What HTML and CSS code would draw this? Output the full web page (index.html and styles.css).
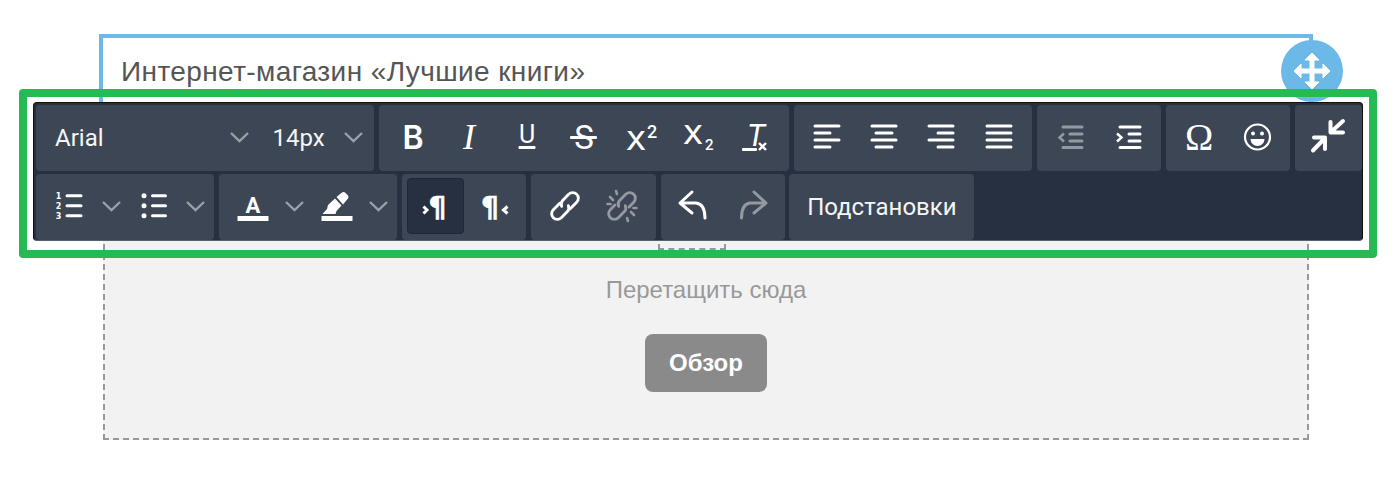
FILE: index.html
```html
<!DOCTYPE html>
<html lang="en">

<head>
  <meta charset="UTF-8">
  <meta name="viewport" content="width=device-width, initial-scale=1.0">
  <title>Редактор</title>
  <link rel="stylesheet" href="styles.css">
</head>

<body>
  <main class="page">
    <section class="editable">
      <h2 class="title">Интернет-магазин «Лучшие книги»</h2>
      <div class="move">
        <svg viewBox="-20 -20 40 40" width="40" height="40"><path class="move-arrows" d="M0-18L7-11H2V-2H11V-7L18 0L11 7V2H2V11H7L0 18L-7 11H-2V2H-11V7L-18 0L-11-7V-2H-2V-11H-7Z"/></svg>
      </div>
    </section>

    <section class="dropzone">
      <div class="drop-thumb"></div>
      <p class="drop-text">Перетащить сюда</p>
      <button class="browse">Обзор</button>
    </section>

    <!-- toolbar lies over the block being edited -->
    <div class="toolbar">
      <div class="row row-top">
        <div class="group group-fonts">
          <div class="select select-font"><span>Arial</span><svg class="chev" viewBox="0 0 27 12" width="27" height="12"><path d="M5 2l8.500 8L22 2"/></svg></div>
          <div class="select select-size"><span>14px</span><svg class="chev" viewBox="0 0 27 12" width="27" height="12"><path d="M5 2l8.500 8L22 2"/></svg></div>
        </div>

        <div class="group">
          <div class="btn"><svg viewBox="0 0 40 40" width="40" height="40"><text class="t-b" x="21" y="32">B</text></svg></div>
          <div class="btn"><svg viewBox="0 0 40 40" width="40" height="40"><text class="t-i" x="20" y="32">I</text></svg></div>
          <div class="btn"><svg viewBox="0 0 40 40" width="40" height="40"><text class="t-u" x="20" y="26">U</text><rect class="fill" x="11.500" y="29" width="17" height="3" rx="1"/></svg></div>
          <div class="btn"><svg viewBox="0 0 40 40" width="40" height="40"><text class="t-s" x="20" y="32">S</text><rect class="fill" x="6" y="19" width="27" height="3" rx="1"/></svg></div>
          <div class="btn"><svg viewBox="0 0 40 40" width="40" height="40"><text class="t-x" x="15" y="33" textLength="20" lengthAdjust="spacingAndGlyphs">X</text><text class="t-sup" x="26" y="21">2</text></svg></div>
          <div class="btn"><svg viewBox="0 0 40 40" width="40" height="40"><text class="t-x" x="15" y="27" textLength="20" lengthAdjust="spacingAndGlyphs">X</text><text class="t-sub" x="27" y="33">2</text></svg></div>
          <div class="btn"><svg viewBox="0 0 40 40" width="40" height="40"><text class="t-t" x="21" y="29">T</text><rect class="fill" x="7" y="31" width="15" height="3" rx="1"/><path class="clear-mark" d="M24 26L31 33M31 26L24 33"/></svg></div>
        </div>

        <div class="group">
          <div class="btn"><svg class="lines" viewBox="0 0 40 40" width="40" height="40"><path d="M8 9h24M8 16h15M8 23h24M8 30h15"/></svg></div>
          <div class="btn"><svg class="lines" viewBox="0 0 40 40" width="40" height="40"><path d="M8 9h24M12 16h16M8 23h24M12 30h16"/></svg></div>
          <div class="btn"><svg class="lines" viewBox="0 0 40 40" width="40" height="40"><path d="M8 9h24M17 16h15M8 23h24M17 30h15"/></svg></div>
          <div class="btn"><svg class="lines" viewBox="0 0 40 40" width="40" height="40"><path d="M8 9h24M8 16h24M8 23h24M8 30h24"/></svg></div>
        </div>

        <div class="group">
          <div class="btn off"><svg class="lines" viewBox="0 0 40 40" width="40" height="40"><path d="M13 10h19M20 17h12M20 24h12M13 30.500h19"/><path class="thin" d="M14 16.500L9.500 20.500L14 24.500"/></svg></div>
          <div class="btn"><svg class="lines" viewBox="0 0 40 40" width="40" height="40"><path d="M12 10h20M21 17h11M21 24h11M12 30.500h20"/><path class="thin" d="M9 16.500L13.500 20.500L9 24.500"/></svg></div>
        </div>

        <div class="group">
          <div class="btn"><svg viewBox="0 0 40 40" width="40" height="40"><text class="t-omega" x="20" y="33">Ω</text></svg></div>
          <div class="btn"><svg viewBox="0 0 40 40" width="40" height="40"><circle class="smile" cx="20.500" cy="20" r="12.500"/><circle class="fill" cx="16" cy="16.500" r="2"/><circle class="fill" cx="25" cy="16.500" r="2"/><path class="fill" d="M13.500 22H27.500A7 7 0 0 1 13.500 22Z"/></svg></div>
        </div>

        <div class="group">
          <div class="btn"><svg class="arrows" viewBox="0 0 40 40" width="40" height="40"><path d="M22.500 5V15.500H35M23 15L35 4M6 20.500H17V32M17 21L5 33.500"/></svg></div>
        </div>
      </div>

      <div class="row">
        <div class="group">
          <div class="split">
            <div class="btn"><svg class="lines" viewBox="0 0 40 40" width="40" height="40"><path d="M17 9.700h14M17 19.700h14M17 29.700h14"/><text class="t-num" x="8.500" y="13">1</text><text class="t-num" x="8.500" y="23">2</text><text class="t-num" x="8.500" y="33">3</text></svg></div>
            <svg class="chev" viewBox="0 0 27 12" width="27" height="12"><path d="M5 2l8.500 8L22 2"/></svg>
          </div>
          <div class="split">
            <div class="btn"><svg class="lines" viewBox="0 0 40 40" width="40" height="40"><path d="M18.500 9.700h13M18.500 19.700h13M18.500 29.700h13"/><circle class="fill" cx="10" cy="9.700" r="2.500"/><circle class="fill" cx="10" cy="19.700" r="2.500"/><circle class="fill" cx="10" cy="29.700" r="2.500"/></svg></div>
            <svg class="chev" viewBox="0 0 27 12" width="27" height="12"><path d="M5 2l8.500 8L22 2"/></svg>
          </div>
        </div>

        <div class="group">
          <div class="split">
            <div class="btn"><svg viewBox="0 0 40 40" width="40" height="40"><text class="t-a" x="20" y="27">A</text><rect class="fill" x="4.500" y="30" width="31" height="5"/></svg></div>
            <svg class="chev" viewBox="0 0 27 12" width="27" height="12"><path d="M5 2l8.500 8L22 2"/></svg>
          </div>
          <div class="split">
            <div class="btn"><svg viewBox="0 0 40 40" width="40" height="40"><path class="fill" d="M19.500 11L25 6.500Q27 5.500 28.500 7L31 9.500Q32 11 31 12.500L26 18.500Z"/><path class="fill" d="M18 12.500L24.500 19.500L19.500 25L18.500 28H5.500L10 23L11 19Z"/><rect class="fill" x="4.500" y="30" width="31" height="5"/></svg></div>
            <svg class="chev" viewBox="0 0 27 12" width="27" height="12"><path d="M5 2l8.500 8L22 2"/></svg>
          </div>
        </div>

        <div class="group">
          <div class="btn active"><svg viewBox="0 0 40 40" width="40" height="40"><text class="t-para" x="21.500" y="31">¶</text><path class="para-mark" d="M7.500 20.500L11 24L7.500 27.500"/></svg></div>
          <div class="btn"><svg viewBox="0 0 40 40" width="40" height="40"><text class="t-para" x="17" y="31">¶</text><path class="para-mark" d="M34.500 20.500L30.500 24L34.500 27.500"/></svg></div>
        </div>

        <div class="group">
          <div class="btn"><svg class="chain" viewBox="0 0 40 40" width="40" height="40"><g transform="translate(20 20) rotate(-45) scale(.87) translate(-20 -20)"><path d="M18 13.500H7.500a6.500 6.500 0 0 0 0 13H17a6.500 6.500 0 0 0 6-4"/><path d="M22 26.500H32.500a6.500 6.500 0 0 0 0-13H23a6.500 6.500 0 0 0-6 4"/></g></svg></div>
          <div class="btn off"><svg class="chain" viewBox="0 0 40 40" width="40" height="40"><g transform="translate(20 20) rotate(-45) scale(.87) translate(-20 -20)"><path d="M15 13.500H7.500a6.500 6.500 0 0 0 0 13H17a6.500 6.500 0 0 0 6-4"/><path d="M25 26.500H32.500a6.500 6.500 0 0 0 0-13H23a6.500 6.500 0 0 0-6 4"/></g><path d="M8 11l3 3M5.500 18h3M14 5l1 3M32 29l-3-3M34.500 22h-3M26 35l-1-3"/></svg></div>
        </div>

        <div class="group">
          <div class="btn"><svg class="arrows thin-arrow" viewBox="0 0 40 40" width="40" height="40"><path d="M18 6L6 17L18 27M6 17H22Q31 18 31 32"/></svg></div>
          <div class="btn off"><svg class="arrows thin-arrow" viewBox="0 0 40 40" width="40" height="40"><path d="M22 6L34 17L22 27M34 17H18Q9.500 18 9.500 32"/></svg></div>
        </div>

        <div class="group group-last">
          <div class="btn btn-text">Подстановки</div>
        </div>
      </div>
    </div>

    <div class="frame"></div>
  </main>
</body>

</html>
```

FILE: styles.css
```css
html {
  background: #fff;
}

body {
  margin: 0;
  font-family: "Liberation Sans", Arial, sans-serif;
}

.page {
  position: relative;
  padding: 34px 0 0 99px;
  height: 448px;
  box-sizing: border-box;
  overflow: hidden;
}

.editable {
  position: relative;
  width: 1214px;
  height: 170px;
  box-sizing: border-box;
  border: 4px solid #6cb9e8;
  border-bottom: 0;
  padding: 19px 18px 0;
}

.title {
  margin: 0;
  font-size: 28px;
  font-weight: 400;
  line-height: 30px;
  letter-spacing: 0.4px;
  color: #555;
}

.move {
  position: absolute;
  top: 2px;
  right: -34px;
  width: 62px;
  height: 62px;
  border-radius: 50%;
  background: #6cb9e8;
  display: flex;
  align-items: center;
  justify-content: center;
}

.move-arrows {
  fill: #fff;
  stroke: #fff;
  stroke-width: 1;
  stroke-linejoin: round;
}

.dropzone {
  width: 1206px;
  height: 236px;
  margin-left: 4px;
  box-sizing: border-box;
  border: 2px dashed #999;
  background: #f2f2f2;
  display: flex;
  flex-direction: column;
  align-items: center;
}

.drop-thumb {
  width: 68px;
  height: 40px;
  margin: 4px 28px 0 0;
  box-sizing: border-box;
  border: 2px dashed #999;
}

.drop-text {
  margin: 27px 0 0;
  font-size: 24px;
  line-height: 26px;
  color: #999;
}

.browse {
  margin-top: 31px;
  width: 122px;
  height: 58px;
  border: 0;
  border-radius: 8px;
  background: #8a8a8a;
  color: #fff;
  font-family: "Liberation Sans", Arial, sans-serif;
  font-size: 24px;
  font-weight: 700;
}

.toolbar {
  position: absolute;
  left: 33px;
  top: 102px;
  width: 1330px;
  height: 139px;
  box-sizing: border-box;
  padding: 2px 0 0 2px;
  border: 1px solid #111;
  border-bottom-color: #59616c;
  border-radius: 4px;
  background: #263040;
  font-family: Roboto, sans-serif;
  color: #f4f5f6;
}

.row {
  display: flex;
  gap: 5px;
  height: 66px;
}

.row-top {
  gap: 4.600px;
  margin-bottom: 3px;
}

.group {
  display: flex;
  align-items: center;
  padding: 4px 5px 6px;
  border-radius: 4px;
  background: #3d4654;
}

.group-fonts {
  width: 338px;
  box-sizing: border-box;
}

.group-last {
  margin-left: -1px;
}

.btn {
  width: 57.200px;
  height: 56px;
  box-sizing: border-box;
  border-radius: 4px;
  display: flex;
  align-items: center;
  justify-content: center;
}

.btn.active {
  background: #263040;
  border: 1px solid #1f2734;
}

.btn.off {
  opacity: 0.45;
}

.btn-text {
  width: auto;
  padding: 2px 12px 0 13px;
  font-size: 24px;
}

.select,
.split {
  display: flex;
  align-items: center;
  height: 56px;
}

.select span {
  flex: 1;
  padding-top: 1px;
  font-size: 24px;
}

.select-font {
  width: 211.500px;
  padding-left: 14px;
  box-sizing: border-box;
}

.select-size {
  width: 114px;
  padding-left: 20px;
  box-sizing: border-box;
}

.split {
  width: 84px;
}

.chev {
  flex: none;
  fill: none;
  stroke: #9aa0a8;
  stroke-width: 2.400;
}

.fill {
  fill: #fff;
}

svg text {
  fill: #fff;
  text-anchor: middle;
}

.t-b {
  font: 600 32px Inter, sans-serif;
}

.t-i {
  font: italic 400 36px "Liberation Serif", serif;
}

.t-u {
  font: 400 25px Roboto, sans-serif;
}

.t-s {
  font: 400 33px Roboto, sans-serif;
}

.t-x {
  font: 500 26px Inter, sans-serif;
}

.t-sup {
  font: 500 18px Roboto, sans-serif;
  text-anchor: start;
}

.t-sub {
  font: 500 15px Roboto, sans-serif;
  text-anchor: start;
}

.t-t {
  font: italic 400 31px Roboto, sans-serif;
}

.clear-mark {
  fill: none;
  stroke: #fff;
  stroke-width: 2.400;
}

.t-omega {
  font: 400 38px "Liberation Serif", serif;
}

.t-num {
  font: 700 8px "DejaVu Sans", sans-serif;
}

.t-a {
  font: 700 22px Roboto, sans-serif;
}

svg .t-para {
  font: 700 28px "DejaVu Sans", sans-serif;
  stroke: #fff;
  stroke-width: 0.6;
}

.lines path {
  fill: none;
  stroke: #fff;
  stroke-width: 3;
  stroke-linecap: round;
}

.lines .thin {
  stroke-width: 2.400;
  stroke-linecap: butt;
}

.para-mark {
  fill: none;
  stroke: #fff;
  stroke-width: 3;
}

.smile {
  fill: none;
  stroke: #fff;
  stroke-width: 2.200;
}

.arrows path {
  fill: none;
  stroke: #fff;
  stroke-width: 4;
  stroke-linecap: round;
  stroke-linejoin: round;
}

.thin-arrow path {
  stroke-width: 3;
}

.chain path {
  fill: none;
  stroke: #fff;
  stroke-width: 3.300;
  stroke-linecap: round;
}

.chain > path {
  stroke-width: 2.600;
}

.frame {
  position: absolute;
  left: 19px;
  top: 89px;
  width: 1358px;
  height: 169px;
  box-sizing: border-box;
  border: 8px solid #26ba54;
  border-radius: 4px;
}
```
